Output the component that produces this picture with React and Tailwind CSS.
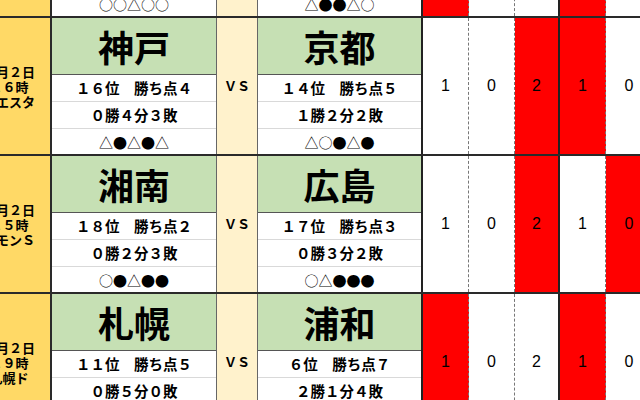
const blocks = [
  {
    date: ['９月２日', '１４時', '等々力'],
    home: { name: '川崎', rank: '３位　勝ち点１０', record: '３勝１分１敗', form: '○○△○○' },
    away: { name: '鹿島', rank: '８位　勝ち点６', record: '２勝０分３敗', form: '△●●△○' },
    red: [true, false, false, true, false],
  },
  {
    date: ['９月２日', '１６時', 'ノエスタ'],
    home: { name: '神戸', rank: '１６位　勝ち点４', record: '０勝４分３敗', form: '△●△●△' },
    away: { name: '京都', rank: '１４位　勝ち点５', record: '１勝２分２敗', form: '△○●△●' },
    red: [false, false, true, true, false],
  },
  {
    date: ['９月２日', '１５時', 'レモンＳ'],
    home: { name: '湘南', rank: '１８位　勝ち点２', record: '０勝２分３敗', form: '○●△●●' },
    away: { name: '広島', rank: '１７位　勝ち点３', record: '０勝３分２敗', form: '○△●●●' },
    red: [false, false, true, false, true],
  },
  {
    date: ['９月２日', '１９時', '札幌ド'],
    home: { name: '札幌', rank: '１１位　勝ち点５', record: '０勝５分０敗', form: '○△●△○' },
    away: { name: '浦和', rank: '６位　勝ち点７', record: '２勝１分４敗', form: '●○△●○' },
    red: [true, false, false, true, false],
  },
];

const scores = ['1', '0', '2', '1', '0'];
const scoreCols = [
  'w-[46px] border-r border-dashed border-r-[#777]',
  'w-[46px] border-r border-dashed border-r-[#777]',
  'w-[45px] border-r-2 border-r-[#222]',
  'w-[46px] border-r border-dashed border-r-[#777]',
  'w-[46px]',
];

function Team({ team, border }) {
  return (
    <div className={`w-[165px] flex flex-col ${border}`}>
      <div className="h-[57px] bg-[#c6e0b4] border-b border-[#555] flex items-center justify-center text-[36px] font-bold text-black leading-none">
        {team.name}
      </div>
      <div className="h-[27px] border-b border-[#d9d9d9] flex items-center justify-center text-[14.5px] font-bold leading-none">
        {team.rank}
      </div>
      <div className="h-[27px] border-b border-[#d9d9d9] flex items-center justify-center text-[14.5px] font-bold leading-none">
        {team.record}
      </div>
      <div className="h-[25px] flex items-center justify-center text-[14px] leading-none">
        {team.form}
      </div>
    </div>
  );
}

function Block({ b }) {
  return (
    <div className="flex h-[138px] border-t-2 border-[#2a2a2a]">
      <div className="w-[84px] shrink-0 bg-[#ffd966] border-r-2 border-[#2a2a2a] flex flex-col items-center justify-center text-[13px] font-bold leading-[15px]">
        {b.date.map((d) => (
          <div key={d}>{d}</div>
        ))}
      </div>
      <Team team={b.home} border="border-r border-[#666]" />
      <div className="w-[41px] shrink-0 bg-[#fff2cc] border-r border-[#666] flex items-center justify-center text-[13px] font-bold">
        ＶＳ
      </div>
      <Team team={b.away} border="border-r-2 border-[#222]" />
      {scores.map((s, i) => (
        <div
          key={i}
          className={`${scoreCols[i]} shrink-0 flex items-center justify-center text-[16px] ${b.red[i] ? 'bg-[#ff0000]' : 'bg-white'}`}
          style={{ fontFamily: '"Liberation Sans", Arial, sans-serif' }}
        >
          {s}
        </div>
      ))}
    </div>
  );
}

export default function App() {
  return (
    <div
      className="w-[640px] h-[400px] overflow-hidden bg-white text-black"
      style={{ fontFamily: '"Noto Sans CJK JP", "Noto Sans", sans-serif' }}
    >
      <div className="-mt-[122px] -ml-[32px] w-[700px]">
        {blocks.map((b, i) => (
          <Block key={i} b={b} />
        ))}
      </div>
    </div>
  );
}
